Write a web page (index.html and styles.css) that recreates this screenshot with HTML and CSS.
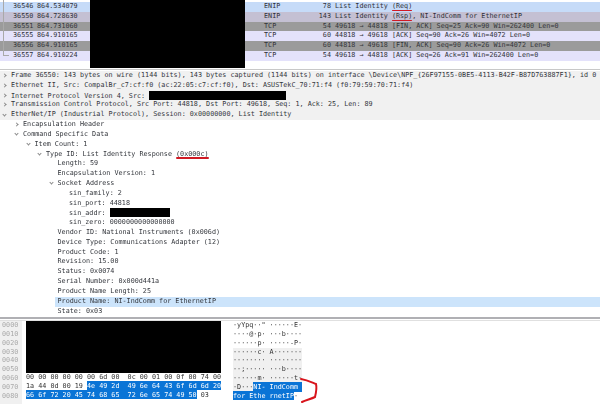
FILE: index.html
```html
<!DOCTYPE html>
<html>
<head>
<meta charset="utf-8">
<title>Wireshark capture</title>
<link rel="stylesheet" href="styles.css">
</head>
<body>
<div class="page">
  <section class="packets">
    <div class="prow enip1"><span class="no">36546</span><span class="time">864.534079</span><span class="proto">ENIP</span><span class="len">78</span><span class="info">List Identity <u class="mark">(Req)</u></span></div>
    <div class="prow enip2"><span class="no">36550</span><span class="time">864.728630</span><span class="proto">ENIP</span><span class="len">143</span><span class="info">List Identity <u class="mark">(Rsp)</u>, NI-IndComm for EthernetIP</span></div>
    <div class="prow dark"><span class="no">36551</span><span class="time">864.731060</span><span class="proto">TCP</span><span class="len">54</span><span class="info">49618 → 44818 [FIN, ACK] Seq=25 Ack=90 Win=262400 Len=0</span></div>
    <div class="prow tcp"><span class="no">36555</span><span class="time">864.910165</span><span class="proto">TCP</span><span class="len">60</span><span class="info">44818 → 49618 [ACK] Seq=90 Ack=26 Win=4072 Len=0</span></div>
    <div class="prow dark"><span class="no">36556</span><span class="time">864.910165</span><span class="proto">TCP</span><span class="len">60</span><span class="info">44818 → 49618 [FIN, ACK] Seq=90 Ack=26 Win=4072 Len=0</span></div>
    <div class="prow tcp"><span class="no">36557</span><span class="time">864.910224</span><span class="proto">TCP</span><span class="len">54</span><span class="info">49618 → 44818 [ACK] Seq=26 Ack=91 Win=262400 Len=0</span></div>
    <div class="rel-line"></div>
    <div class="redact-top"></div>
  </section>

  <section class="details">
    <div class="drow shaded"><i class="tw closed"></i>Frame 36550: 143 bytes on wire (1144 bits), 143 bytes captured (1144 bits) on interface \Device\NPF_{26F97155-0BE5-4113-B42F-B87D763887F1}, id 0</div>
    <div class="drow shaded"><i class="tw closed"></i>Ethernet II, Src: CompalBr_c7:cf:f0 (ac:22:05:c7:cf:f0), Dst: ASUSTekC_70:71:f4 (f0:79:59:70:71:f4)</div>
    <div class="drow shaded"><i class="tw closed"></i>Internet Protocol Version 4, Src: <b class="blk b1"></b></div>
    <div class="drow shaded"><i class="tw closed"></i>Transmission Control Protocol, Src Port: 44818, Dst Port: 49618, Seq: 1, Ack: 25, Len: 89</div>
    <div class="drow shaded"><i class="tw open"></i>EtherNet/IP (Industrial Protocol), Session: 0x00000000, List Identity</div>
    <div class="drow l1"><i class="tw closed"></i>Encapsulation Header</div>
    <div class="drow l1"><i class="tw open"></i>Command Specific Data</div>
    <div class="drow l2"><i class="tw open"></i>Item Count: 1</div>
    <div class="drow l3"><i class="tw open"></i>Type ID: List Identity Response <u class="mark">(0x000c)</u></div>
    <div class="drow l4">Length: 59</div>
    <div class="drow l4">Encapsulation Version: 1</div>
    <div class="drow l4"><i class="tw open"></i>Socket Address</div>
    <div class="drow l5">sin_family: 2</div>
    <div class="drow l5">sin_port: 44818</div>
    <div class="drow l5">sin_addr: <b class="blk b2"></b></div>
    <div class="drow l5">sin_zero: 0000000000000000</div>
    <div class="drow l4">Vendor ID: National Instruments (0x006d)</div>
    <div class="drow l4">Device Type: Communications Adapter (12)</div>
    <div class="drow l4">Product Code: 1</div>
    <div class="drow l4">Revision: 15.00</div>
    <div class="drow l4">Status: 0x0074</div>
    <div class="drow l4">Serial Number: 0x000d441a</div>
    <div class="drow l4">Product Name Length: 25</div>
    <div class="drow l4 sel">Product Name: NI-IndComm for EthernetIP</div>
    <div class="drow l4">State: 0x03</div>
  </section>

  <section class="hex">
    <div class="offsets">
      <div>0000</div><div>0010</div><div>0020</div><div>0030</div><div>0040</div><div>0050</div><div>0060</div><div>0070</div><div>0080</div>
    </div>
    <div class="bytes">
      <div class="redact-hex"></div>
      <div class="hrow">00 00 00 00 00 00 6d 00  0c 00 01 00 0f 00 74 00</div>
      <div class="hrow">1a 44 0d 00 19 <em>4e 49 2d  49 6e 64 43 6f 6d 6d 20</em></div>
      <div class="hrow"><em>66 6f 72 20 45 74 68 65  72 6e 65 74 49 50</em> 03</div>
    </div>
    <div class="ascii">
      <div class="arow">·yYpq··" ······E·</div>
      <div class="arow">····@·p· ···b····</div>
      <div class="arow">······p· ·····-P·</div>
      <div class="arow tint">······c· A·······</div>
      <div class="arow tint">········ ········</div>
      <div class="arow tint">··;····· ···b····</div>
      <div class="arow tint">······m· ······t·</div>
      <div class="arow tint">·D···<em>NI- IndComm </em></div>
      <div class="arow"><em>for Ethe rnetIP</em>·</div>
      <svg class="brace" viewBox="0 0 20 26" aria-hidden="true"><path d="M1 1 C7 2 11 4 16 6 C17 10 16 15 15 19 C11 21 6 22 2 24"/></svg>
    </div>
  </section>
</div>
</body>
</html>
```

FILE: styles.css
```css
* { box-sizing: border-box; }
html, body { margin: 0; padding: 0; background: #fff; }
.page {
  width: 600px;
  height: 404px;
  overflow: hidden;
  display: flex;
  flex-direction: column;
  font-family: "DejaVu Sans Mono", monospace;
  font-size: 6.75px;
  color: #333;
  filter: blur(0.3px);
}
.packets { position: relative; padding-top: 2px; height: 70px; border-bottom: 1px solid #c8c8c8; flex: none; }
.prow { display: flex; height: 9.8px; line-height: 9.8px; white-space: pre; color: #2f3138; }
.no { margin-left: 13px; width: 24px; }
.time { width: 227px; }
.proto { width: 26px; }
.len { width: 41px; text-align: right; }
.info { margin-left: 4px; }
.enip1 { background: #c6dbf8; }
.enip2 { background: #c4c0d3; }
.dark { background: #9b9b9b; color: #33353a; }
.tcp { background: #e4e2fb; }
.rel-line { position: absolute; left: 3px; top: 0; width: 6px; height: 56px; border-left: 1px solid #a9a9a9; border-bottom: 1px solid #a9a9a9; }
.redact-top { position: absolute; left: 90px; top: 0; width: 155px; height: 68px; background: #000; }
.mark { text-decoration: none; position: relative; }
.mark::after { content: ""; position: absolute; left: 0; right: 0; bottom: -1px; height: 1.3px; background: #d01a24; border-radius: 1px; }

.details { height: 249px; flex: none; padding-top: 1px; border-bottom: 2px solid #b0b0b4; }
.drow { height: 9.82px; line-height: 9.82px; padding-left: 11px; white-space: pre; position: relative; color: #33363c; }
.shaded { background: #f1f1f1; }
.tw { position: absolute; width: 3px; height: 3px; margin-left: -8px; top: 3px; border-right: 1px solid #8a8a8a; border-bottom: 1px solid #8a8a8a; }
.open { transform: rotate(45deg); margin-top: -0.5px; }
.closed { transform: rotate(-45deg); }
.l1 { padding-left: 23px; }
.l2 { padding-left: 34.5px; }
.l3 { padding-left: 46px; }
.l4 { padding-left: 57.5px; }
.l5 { padding-left: 69px; }
.sel { background: #cce4fb; margin-left: 55px; padding-left: 2.5px; }
.blk { display: inline-block; background: #000; height: 9px; vertical-align: -2px; }
.b1 { width: 137px; }
.b2 { width: 60px; }

.hex { flex: 1; display: flex; margin-top: 1px; border-top: 1px solid #e0e0e0; line-height: 8.85px; }
.offsets { width: 22px; background: #f0f0f0; padding-left: 2px; color: #a8a8a8; flex: none; margin-right: 4px; }
.bytes { width: 207px; flex: none; color: #333; }
.redact-hex { width: 195px; height: 51.5px; background: #000; }
.hrow { height: 9px; line-height: 9px; white-space: pre; }
em { font-style: normal; background: #0a74d6; color: #fff; padding: 0.6px 0; }
.ascii { position: relative; width: 69px; flex: none; }
.arow { height: 8.85px; white-space: pre; }
.tint { background: #f0f0f0; }
.brace { position: absolute; left: 67px; top: 57px; width: 20px; height: 26px; overflow: visible; }
.brace path { fill: none; stroke: #d8141c; stroke-width: 2px; stroke-linecap: round; }
```
